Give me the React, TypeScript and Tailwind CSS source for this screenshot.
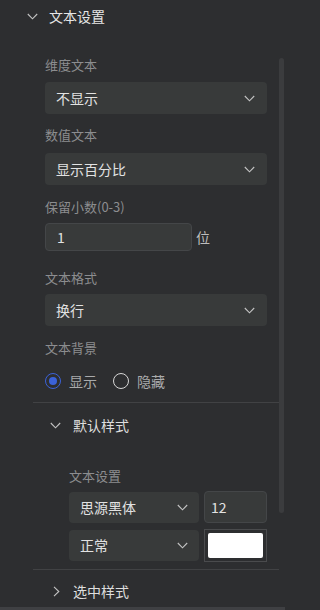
import React from "react";

const font = { fontFamily: '"Noto Sans CJK SC", "Noto Sans", sans-serif' };

function Down({ className = "" }: { className?: string }) {
  return (
    <svg width="11" height="7" viewBox="0 0 11 7" className={className} fill="none">
      <polyline points="0.8,1 5.5,5.8 10.2,1" stroke="#c4c4c4" strokeWidth="1.1" />
    </svg>
  );
}

function Right() {
  return (
    <svg width="7" height="11" viewBox="0 0 7 11" fill="none">
      <polyline points="1,0.8 5.8,5.5 1,10.2" stroke="#c4c4c4" strokeWidth="1.1" />
    </svg>
  );
}

function Label({ children, className = "" }: { children: React.ReactNode; className?: string }) {
  return <div className={`h-[20px] leading-[20px] text-[13px] text-[#8c8d8f] ${className}`}>{children}</div>;
}

function Select({ value, className = "" }: { value: string; className?: string }) {
  return (
    <div className={`h-[32px] rounded-[4px] bg-[#383a3a] flex items-center justify-between pl-[11px] pr-[12px] ${className}`}>
      <span className="text-[14px] text-[#e2e2e2]">{value}</span>
      <Down />
    </div>
  );
}

export default function App() {
  return (
    <div className="min-h-screen w-full bg-[#2d2e30]">
      <div className="relative w-[285px] h-[610px] bg-[#2d2e30] overflow-hidden" style={font}>
        <div className="h-[32px] flex items-center pl-[27px]">
          <Down />
          <span className="ml-[11px] text-[14px] text-[#e6e6e6]">文本设置</span>
        </div>

        <div className="pl-[45px] pr-[18px]">
          <Label className="mt-[23px]">维度文本</Label>
          <Select value="不显示" className="mt-[7px]" />
          <Label className="mt-[11px]">数值文本</Label>
          <Select value="显示百分比" className="mt-[8px]" />
          <Label className="mt-[12px]">保留小数(0-3)</Label>
          <div className="mt-[6px] flex items-center">
            <div className="w-[147px] h-[28px] rounded-[4px] bg-[#383a3a] border border-[#444648] flex items-center pl-[11px] text-[14px] text-[#e2e2e2]">
              1
            </div>
            <span className="ml-[4px] text-[14px] text-[#bdbdbd]">位</span>
          </div>
          <Label className="mt-[17px]">文本格式</Label>
          <Select value="换行" className="mt-[6px]" />
          <Label className="mt-[12px]">文本背景</Label>
          <div className="mt-[13px] h-[20px] flex items-center">
            <span className="w-[16px] h-[16px] rounded-full border-[1.5px] border-[#3b62d9] flex items-center justify-center">
              <span className="w-[8px] h-[8px] rounded-full bg-[#3b62d9]" />
            </span>
            <span className="ml-[8px] text-[14px] text-[#a9aaab]">显示</span>
            <span className="ml-[16px] w-[16px] h-[16px] rounded-full border border-[#d6d6d6]" />
            <span className="ml-[8px] text-[14px] text-[#a9aaab]">隐藏</span>
          </div>
        </div>

        <div className="mt-[11px] ml-[33px] mr-[6px] h-px bg-[#414244]" />

        <div className="h-[44px] flex items-center pl-[50px]">
          <Down />
          <span className="ml-[12px] text-[14px] text-[#dedede]">默认样式</span>
        </div>

        <div className="pl-[69px] pr-[18px]">
          <Label className="mt-[19px]">文本设置</Label>
          <div className="mt-[6px] flex gap-[5px]">
            <div className="w-[130px] h-[31px] rounded-[4px] bg-[#383a3a] flex items-center justify-between pl-[11px] pr-[11px]">
              <span className="text-[14px] text-[#e2e2e2]">思源黑体</span>
              <Down />
            </div>
            <div className="flex-1 h-[32px] -mt-px rounded-[4px] bg-[#383a3a] border border-[#444648] flex items-center pl-[6px] text-[14px] text-[#e2e2e2]">
              12
            </div>
          </div>
          <div className="mt-[7px] flex gap-[5px]">
            <div className="w-[130px] h-[31px] rounded-[4px] bg-[#383a3a] flex items-center justify-between pl-[11px] pr-[11px]">
              <span className="text-[14px] text-[#e2e2e2]">正常</span>
              <Down />
            </div>
            <div className="flex-1 h-[33px] -mt-px border border-[#4a4b4d] p-[3px]">
              <div className="w-full h-full bg-white rounded-[2px]" />
            </div>
          </div>
        </div>

        <div className="mt-[7px] ml-[33px] mr-[6px] h-px bg-[#414244]" />

        <div className="h-[46px] flex items-center pl-[53px] -mt-[2px]">
          <Right />
          <span className="ml-[13px] text-[14px] text-[#dedede]">选中样式</span>
        </div>

        <div className="absolute right-[1px] top-[58px] w-[5px] h-[455px] rounded-[3px] bg-[#3b3c3e]" />
        <div className="absolute left-0 bottom-0 w-full h-[3px] bg-[#3f4043]" />
      </div>
    </div>
  );
}
